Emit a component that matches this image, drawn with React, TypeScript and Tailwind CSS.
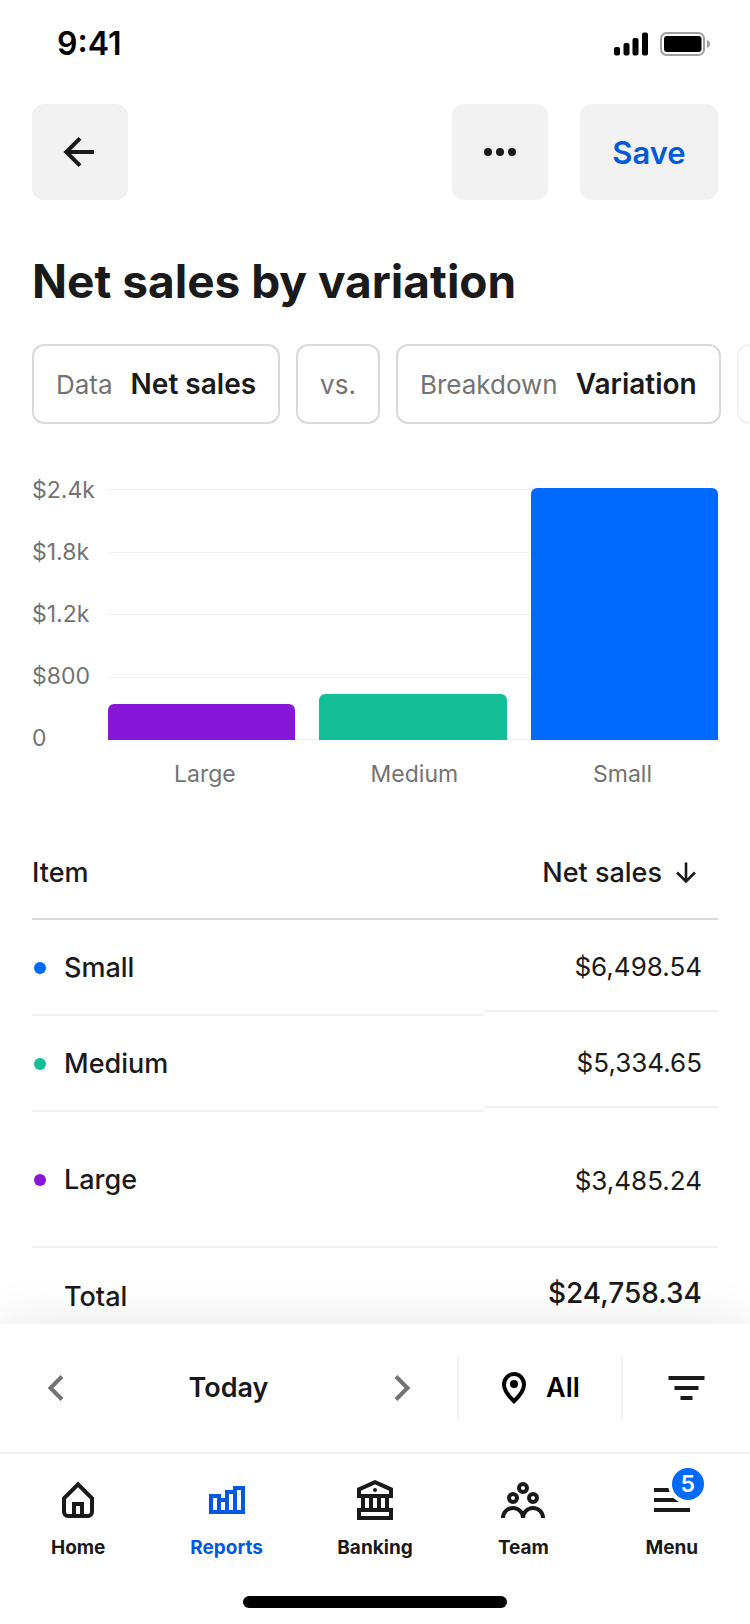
import type { ReactNode } from "react";

const bars = [
  { label: "Large", height: "h-9", color: "bg-[#8716d9]" },
  { label: "Medium", height: "h-[46px]", color: "bg-[#13bf96]" },
  { label: "Small", height: "h-[252px]", color: "bg-[#006aff]" },
];

const ticks = ["$2.4k", "$1.8k", "$1.2k", "$800", "0"];

const rows = [
  { label: "Small", value: "$6,498.54", dot: "bg-[#006aff]", left: "h-24", right: "h-[92px]" },
  { label: "Medium", value: "$5,334.65", dot: "bg-[#13bf96]", left: "h-24", right: "h-[92px]" },
  { label: "Large", value: "$3,485.24", dot: "bg-[#8716d9]", left: "h-[136px]", right: "h-[136px]" },
];

function Icon({ children }: { children: ReactNode }) {
  return (
    <svg viewBox="0 0 48 48" className="size-12" fill="none" stroke="currentColor" strokeWidth="4" aria-hidden="true">
      {children}
    </svg>
  );
}

function StatusBar() {
  return (
    <div className="flex h-[88px] items-center justify-between pr-[39px] pl-[57px] text-black">
      <span className="text-[32px] leading-10 font-semibold">9:41</span>
      <svg viewBox="0 0 98 24" className="h-6 w-[98px]" aria-hidden="true">
        <rect x="1" y="15" width="6" height="8.500" rx="2" />
        <rect x="10.500" y="11" width="6" height="12.500" rx="2" />
        <rect x="19.500" y="6" width="6" height="17.500" rx="2" />
        <rect x="29" y="0.500" width="6" height="23" rx="2" />
        <rect x="48" y="1" width="43" height="22" rx="5.500" fill="none" stroke="#a0a0a0" strokeWidth="2" />
        <rect x="51" y="4" width="37.500" height="16" rx="3" />
        <path d="M94 8c2 .8 3 2.200 3 4s-1 3.200-3 4z" fill="#a0a0a0" />
      </svg>
    </div>
  );
}

function Chip({ label, value }: { label: string; value?: string }) {
  return (
    <button className="flex h-20 shrink-0 items-center gap-[18px] rounded-xl border-2 border-[#d9d9d9] px-[22px] text-[26px] whitespace-nowrap">
      <span className="text-[#737373]">{label}</span>
      {value && <span className="text-[28px] font-semibold">{value}</span>}
    </button>
  );
}

function Chart() {
  return (
    <section aria-label="Net sales chart" className="mt-16 px-8 text-[23px] text-[#737373]">
      <div className="flex">
        <div className="-my-2.5 flex w-[76px] flex-col justify-between leading-6">
          {ticks.map((t) => (
            <span key={t}>{t}</span>
          ))}
        </div>
        <div className="grid h-[252px] flex-1">
          <div className="flex flex-col justify-between pt-px [grid-area:1/1]">
            {ticks.map((t) => (
              <div key={t} className="h-px bg-[#f2f2f2]" />
            ))}
          </div>
          <div className="grid grid-cols-3 items-end gap-6 [grid-area:1/1]">
            {bars.map((b) => (
              <div key={b.label} className={`rounded-t-md ${b.height} ${b.color}`} />
            ))}
          </div>
        </div>
      </div>
      <div className="mt-[18px] ml-[76px] flex justify-between px-[66px] leading-8">
        {bars.map((b) => (
          <span key={b.label}>{b.label}</span>
        ))}
      </div>
    </section>
  );
}

function SalesTable() {
  return (
    <div className="mt-[38px] px-8">
      <table className="w-full table-fixed border-separate border-spacing-0 text-[27px]">
        <thead>
          <tr>
            <th className="h-[92px] border-b-2 border-[#d9d9d9] p-0 text-left font-medium">Item</th>
            <th className="w-[234px] border-b-2 border-[#d9d9d9] p-0 text-right font-medium">
              <button className="inline-flex items-center gap-[14px] pr-[22px] font-medium whitespace-nowrap">
                Net sales
                <svg viewBox="0 0 20 22" className="h-[22px] w-5" fill="none" stroke="currentColor" strokeWidth="2.600" aria-hidden="true">
                  <path d="M10 .5V19M1 10.500l9 9 9-9" />
                </svg>
              </button>
            </th>
          </tr>
        </thead>
        <tbody>
          {rows.map((r) => (
            <tr key={r.label} className="align-top">
              <th className="p-0 text-left font-medium">
                <div className={`flex items-center border-b-2 border-[#f2f2f2] pt-0.5 pl-0.5 ${r.left}`}>
                  <span className={`mr-[18px] size-3 rounded-full ${r.dot}`} />
                  {r.label}
                </div>
              </th>
              <td className="p-0">
                <div className={`flex items-center justify-end border-b-2 border-[#f2f2f2] pt-0.5 pr-4 text-[26px] ${r.right}`}>
                  {r.value}
                </div>
              </td>
            </tr>
          ))}
          <tr className="align-top">
            <th className="p-0 text-left font-medium">
              <div className="flex h-24 items-center pt-0.5 pl-8">Total</div>
            </th>
            <td className="p-0 text-[28px] font-medium">
              <div className="flex h-[90px] items-center justify-end pr-4">$24,758.34</div>
            </td>
          </tr>
        </tbody>
      </table>
    </div>
  );
}

function FilterBar() {
  return (
    <div className="flex h-[128px] items-center text-[27px] font-semibold">
      <div className="flex flex-1 items-center justify-between px-8">
        <button aria-label="Previous day" className="text-[#737373]">
          <Icon><path d="M30 12.500 18.500 24 30 35.500" /></Icon>
        </button>
        <button>Today</button>
        <button aria-label="Next day" className="text-[#737373]">
          <Icon><path d="M19 12.500 30.500 24 19 35.500" /></Icon>
        </button>
      </div>
      <button className="flex h-16 w-[166px] items-center justify-center gap-5 border-x-2 border-[#f2f2f2] pl-0.5 text-black">
        <svg viewBox="0 0 24 32" className="h-8 w-6" fill="none" stroke="currentColor" strokeWidth="4" aria-hidden="true">
          <path d="M12 29.200C7 24.500 2 18.800 2 12.500a10 10.500 0 0 1 20 0c0 6.300-5 12-10 16.700z" />
          <circle cx="12" cy="12" r="4" fill="currentColor" stroke="none" />
        </svg>
        All
      </button>
      <button aria-label="Filters" className="flex w-[127px] justify-center">
        <Icon><path d="M5.500 14h36M11.500 24h24M17.500 34h12" /></Icon>
      </button>
    </div>
  );
}

const tabs = [
  {
    label: "Home",
    icon: <path d="M24 8.300 10 22.300V36a4 4 0 0 0 4 4h20a4 4 0 0 0 4-4V22.300zM20 40V28h8v12" />,
  },
  {
    label: "Reports",
    active: true,
    icon: <path d="M8 20h8v16H8zM16 24h8v12h-8zM24 16h8v20h-8zM32 12h8v24h-8z" />,
  },
  {
    label: "Banking",
    icon: (
      <>
        <path d="M8 20v-6.700L24 6.200l16 7.100V20zM12 20v14M20 20v14M28 20v14M36 20v14M8 34h32v8H8z" />
        <circle cx="24" cy="14" r="2" fill="currentColor" stroke="none" />
      </>
    ),
  },
  {
    label: "Team",
    icon: (
      <>
        <circle cx="24" cy="12" r="4" />
        <circle cx="14" cy="22" r="4" />
        <circle cx="34" cy="22" r="4" />
        <path d="M4 42a10 10 0 0 1 20 0 10 10 0 0 1 20 0" />
      </>
    ),
  },
  { label: "Menu", badge: "5", icon: <path d="M6 14h36M6 24h36M6 34h36" /> },
];

function TabBar() {
  return (
    <nav className="flex border-t-2 border-[#f2f2f2] px-1 pt-[22px]">
      {tabs.map((t) => (
        <a
          key={t.label}
          href={`#${t.label.toLowerCase()}`}
          className={`flex flex-1 flex-col items-center gap-[11px] text-[19px] leading-[26px] font-bold ${t.active ? "text-[#005ad9]" : ""}`}
        >
          <span className="relative">
            <Icon>{t.icon}</Icon>
            {t.badge && (
              <span className="absolute -top-2 left-6 flex size-8 items-center justify-center rounded-full bg-[#006aff] text-[23px] font-semibold text-white ring-4 ring-white">
                {t.badge}
              </span>
            )}
          </span>
          {t.label}
        </a>
      ))}
    </nav>
  );
}

export default function App() {
  return (
    <div className="flex h-screen flex-col bg-white font-['Inter','Liberation_Sans',sans-serif] text-[#1a1a1a]">
      <main className="min-h-0 flex-1 overflow-x-hidden overflow-y-auto [scrollbar-width:none]">
        <StatusBar />
        <header className="flex gap-8 px-8 pt-4">
          <button aria-label="Back" className="mr-auto flex size-24 items-center justify-center rounded-xl bg-[#f1f1f1]">
            <Icon><path d="M24 10.300 10.300 24 24 37.700M10 24h28" /></Icon>
          </button>
          <button aria-label="More options" className="flex size-24 items-center justify-center rounded-xl bg-[#f1f1f1]">
            <svg viewBox="0 0 48 48" className="size-12" fill="currentColor" aria-hidden="true">
              <circle cx="12" cy="24" r="4" />
              <circle cx="24" cy="24" r="4" />
              <circle cx="36" cy="24" r="4" />
            </svg>
          </button>
          <button className="h-24 w-[138px] rounded-xl bg-[#f1f1f1] pt-0.5 text-[31px] font-semibold text-[#005ad9]">Save</button>
        </header>
        <h1 className="mt-[50px] px-8 text-[46px] leading-[62px] font-bold">Net sales by variation</h1>
        <div className="mt-8 flex gap-4 overflow-hidden pl-8">
          <Chip label="Data" value="Net sales" />
          <Chip label="vs." />
          <Chip label="Breakdown" value="Variation" />
          <button aria-label="Add breakdown" className="h-20 w-20 shrink-0 rounded-xl border-2 border-[#f2f2f2]" />
        </div>
        <Chart />
        <SalesTable />
      </main>
      <footer className="relative z-10 bg-white shadow-[0_0_48px_rgba(0,0,0,0.1)]">
        <FilterBar />
        <TabBar />
        <div className="flex justify-center pt-[35px] pb-4">
          <div className="h-3 w-[264px] rounded-full bg-black" />
        </div>
      </footer>
    </div>
  );
}
